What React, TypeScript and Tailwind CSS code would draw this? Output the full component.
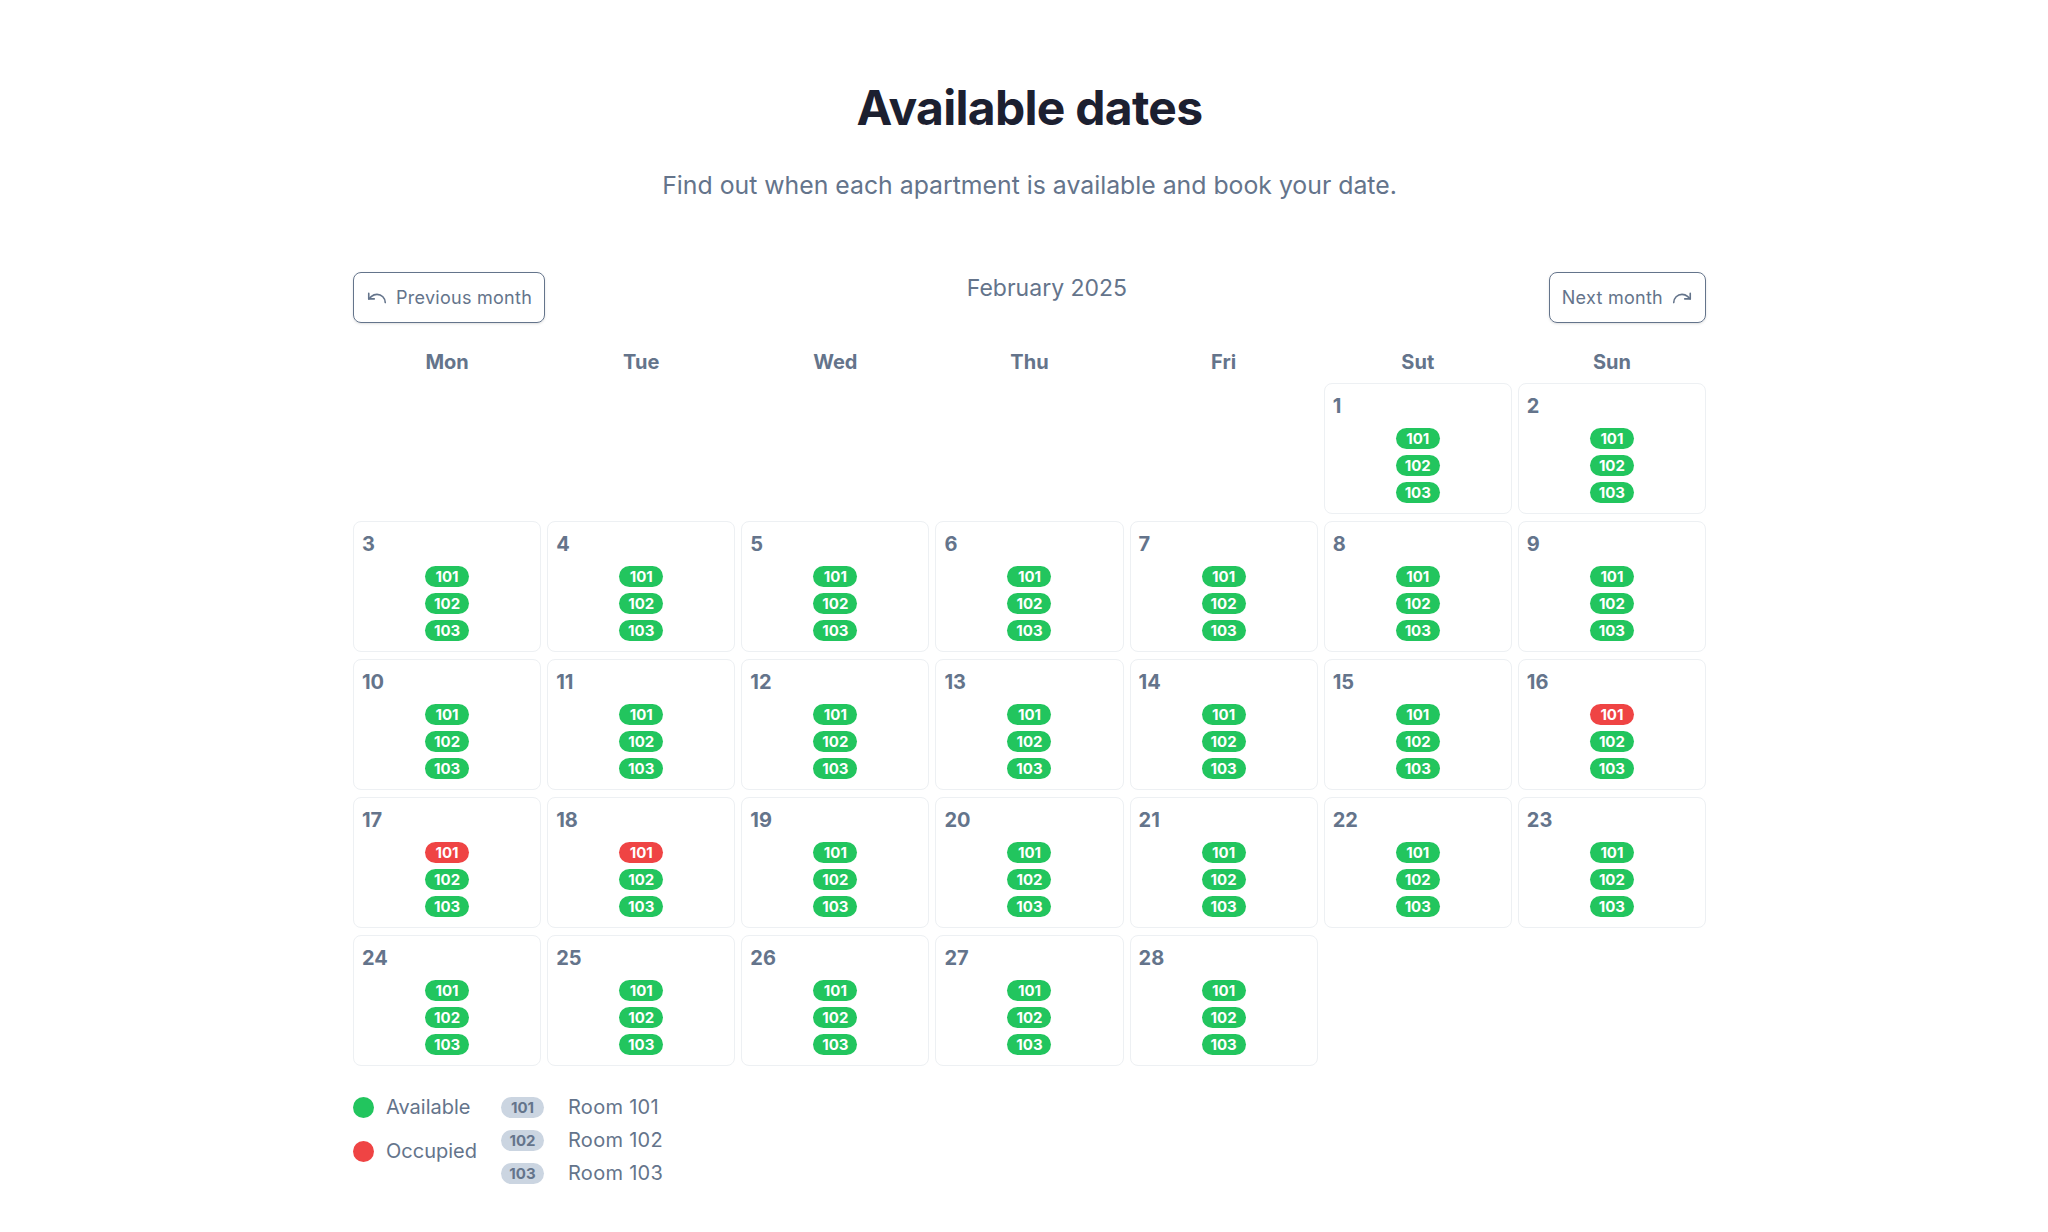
import { Undo, Redo } from "lucide-react";

type Day = { day: number; occupied: number[] };

const ROOMS = [101, 102, 103];
const WEEKDAYS = ["Mon", "Tue", "Wed", "Thu", "Fri", "Sut", "Sun"];

// February 2025 starts on a Saturday
const LEAD = 5;
const occupiedByDay: Record<number, number[]> = {
  16: [101],
  17: [101],
  18: [101],
};

const days: Day[] = Array.from({ length: 28 }, (_, i) => ({
  day: i + 1,
  occupied: occupiedByDay[i + 1] ?? [],
}));

function RoomBadge({ room, occupied }: { room: number; occupied: boolean }) {
  const color = occupied ? "bg-[#ef4444]" : "bg-[#22c55e]";
  return (
    <span
      className={`${color} text-white rounded-full px-2 text-[15px] leading-[21px] font-bold w-[44px] text-center`}
    >
      {room}
    </span>
  );
}

function DayCell({ day }: { day: Day }) {
  return (
    <div className="h-[131px] border border-[#edf0f3] rounded-lg bg-white px-2 pt-2 pb-3 flex flex-col">
      <span className="text-xl leading-7 font-bold text-[#64748b]">{day.day}</span>
      <div className="flex flex-col items-center gap-[6px] mt-2">
        {ROOMS.map((room) => (
          <RoomBadge key={room} room={room} occupied={day.occupied.includes(room)} />
        ))}
      </div>
    </div>
  );
}

export default function App() {
  return (
    <div className="min-h-screen bg-white pl-[11px] font-['Inter','Noto_Sans',sans-serif]">
      <div className="w-[1353px] mx-auto pt-[84px] pb-10">
        <h1 className="text-5xl leading-none font-bold text-center text-[#1c2030] tracking-[-0.015em]">
          Available dates
        </h1>
        <p className="text-[24.8px] leading-8 text-center text-[#64748b] mt-[37px]">
          Find out when each apartment is available and book your date.
        </p>

        <div className="flex flex-row justify-between items-start mt-[71px]">
          <button className="flex flex-row items-center gap-2 px-3 py-3 border border-[#64748b] rounded-lg text-lg leading-6 tracking-[0.015em] text-[#64748b] shadow-sm h-[51px]">
            <Undo size={22} strokeWidth={1.75} />
            Previous month
          </button>
          <h2 className="text-[23px] leading-8 text-[#64748b]">February 2025</h2>
          <button className="flex flex-row items-center gap-2 px-3 py-3 border border-[#64748b] rounded-lg text-lg leading-6 tracking-[0.015em] text-[#64748b] shadow-sm h-[51px]">
            Next month
            <Redo size={22} strokeWidth={1.75} />
          </button>
        </div>

        <div className="grid grid-cols-7 gap-x-[6px] gap-y-[7px] mt-[25px]">
          {WEEKDAYS.map((d) => (
            <div key={d} className="text-xl leading-7 font-bold text-center text-[#64748b]">
              {d}
            </div>
          ))}
          {Array.from({ length: LEAD }, (_, i) => (
            <div key={`e${i}`} />
          ))}
          {days.map((d) => (
            <DayCell key={d.day} day={d} />
          ))}
        </div>

        <div className="flex flex-row gap-6 mt-[27px]">
          <div className="flex flex-col gap-4">
            <div className="flex flex-row items-center gap-3">
              <span className="w-[21px] h-[21px] rounded-full bg-[#22c55e]" />
              <span className="text-xl leading-7 text-[#64748b]">Available</span>
            </div>
            <div className="flex flex-row items-center gap-3">
              <span className="w-[21px] h-[21px] rounded-full bg-[#ef4444]" />
              <span className="text-xl leading-7 text-[#64748b]">Occupied</span>
            </div>
          </div>
          <div className="flex flex-col gap-[5px]">
            {ROOMS.map((room) => (
              <div key={room} className="flex flex-row items-center gap-6">
                <span className="bg-[#cbd5e1] text-[#64748b] rounded-full px-2 text-[15px] leading-[21px] font-bold w-[43px] text-center">
                  {room}
                </span>
                <span className="text-xl leading-7 tracking-[0.015em] text-[#64748b]">Room {room}</span>
              </div>
            ))}
          </div>
        </div>
      </div>
    </div>
  );
}
